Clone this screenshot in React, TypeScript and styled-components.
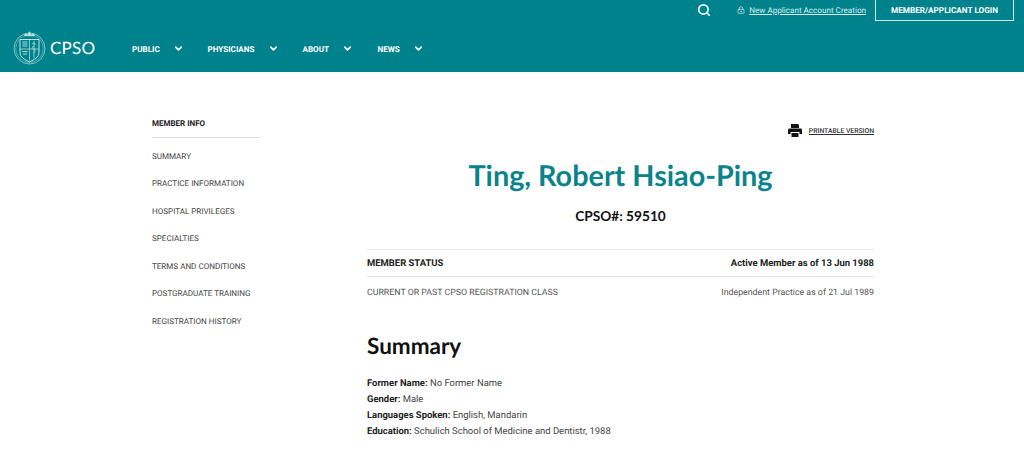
import styled, { createGlobalStyle } from "styled-components";
import { ChevronDown, Search, LockKeyhole } from "lucide-react";

const GlobalStyle = createGlobalStyle`
  html, body {
    margin: 0;
    padding: 0;
    background: #fff;
    font-family: Roboto, "Liberation Sans", sans-serif;
    text-rendering: geometricPrecision;
    overflow: hidden;
  }
  * {
    box-sizing: border-box;
  }
`;

const Header = styled.header`
  height: 72px;
  background-color: #00828c;
  color: #fff;
  display: flex;
  flex-direction: column;
`;

const TopBar = styled.div`
  display: flex;
  justify-content: flex-end;
  align-items: flex-start;
  padding-right: 10px;
  height: 21px;
`;

const SearchButton = styled.span`
  display: flex;
  margin: 3px 26px 0 0;
  color: #e6f5f5;
`;

const AccountLink = styled.a`
  display: flex;
  align-items: center;
  gap: 4px;
  height: 20px;
  margin-right: 9px;
  font-size: 8.12px;
  color: #d8efef;
  span {
    text-decoration: underline;
  }
`;

const LoginButton = styled.a`
  width: 139px;
  height: 21px;
  padding-top: 1px;
  border: 1px solid #cfe8e8;
  border-top: 0;
  display: flex;
  align-items: center;
  justify-content: center;
  font-size: 8.2px;
  font-weight: 700;
`;

const NavBar = styled.div`
  display: flex;
  align-items: center;
  margin-top: 8px;
  padding-left: 13px;
  height: 36px;
`;

const Logo = styled.a`
  display: flex;
  align-items: center;
  gap: 4px;
  width: 119px;
  font-family: Lato, sans-serif;
  font-size: 17px;
  letter-spacing: 0.2px;
`;

const MainMenu = styled.nav`
  display: flex;
  margin-top: 3px;
`;

const MenuItem = styled.a<{ $width: number }>`
  display: flex;
  align-items: center;
  width: ${(p) => p.$width}px;
  font-size: 8.1px;
  font-weight: 700;
  svg {
    margin-left: 13px;
  }
`;

const Page = styled.main`
  display: flex;
  padding: 45px 150px 0 152px;
`;

const Sidebar = styled.aside`
  width: 108px;
  margin-right: 107px;
`;

const SidebarTitle = styled.h4`
  margin: 0;
  height: 21px;
  border-bottom: 1px solid #dedede;
  font-size: 8px;
  font-weight: 700;
  line-height: 14px;
  color: #222;
`;

const SidebarList = styled.ul`
  list-style: none;
  margin: 11.5px 0 0;
  padding: 0;
`;

const SidebarItem = styled.li`
  height: 27.5px;
  font-size: 8.05px;
  line-height: 13px;
  color: #444;
  white-space: nowrap;
`;

const Content = styled.section`
  width: 507px;
`;

const PrintRow = styled.div`
  display: flex;
  justify-content: flex-end;
  align-items: center;
  gap: 7px;
  margin-top: 7px;
  height: 13px;
  color: #111;
`;

const PrintLink = styled.a`
  font-size: 6.8px;
  font-weight: 500;
  text-decoration: underline;
  color: #333;
`;

const Name = styled.h1`
  margin: 22px 0 0;
  text-align: center;
  font-family: Lato, sans-serif;
  font-size: 28.8px;
  line-height: 34px;
  font-weight: 700;
  color: #0a838c;
`;

const MemberNumber = styled.h3`
  margin: 14px 0 0;
  text-align: center;
  font-family: Lato, sans-serif;
  font-size: 13.7px;
  line-height: 18px;
  font-weight: 700;
  color: #111;
`;

const StatusRow = styled.div<{ $strong?: boolean }>`
  display: flex;
  justify-content: space-between;
  align-items: ${(p) => (p.$strong ? "center" : "flex-end")};
  height: 27px;
  padding-bottom: ${(p) => (p.$strong ? 0 : 5)}px;
  font-size: ${(p) => (p.$strong ? 9.45 : 8.8)}px;
  font-weight: ${(p) => (p.$strong ? 700 : 400)};
  color: ${(p) => (p.$strong ? "#222" : "#555")};
  border-top: 1px solid #e4e4e4;
`;

const StatusTable = styled.div`
  margin-top: 24px;
`;

const SectionTitle = styled.h2`
  margin: 29px 0 0;
  font-family: Lato, sans-serif;
  font-size: 22.5px;
  line-height: 28px;
  font-weight: 700;
  color: #111;
`;

const Details = styled.div`
  margin-top: 16px;
`;

const DetailLine = styled.p`
  margin: 0;
  font-size: 9.45px;
  line-height: 16px;
  color: #444;
  b {
    font-weight: 700;
    color: #222;
  }
`;

function CrestLogo() {
  return (
    <svg width="33" height="35" viewBox="0 0 33 35" fill="none" stroke="#bfe3e3" strokeWidth="0.7">
      <circle cx="16.5" cy="18.5" r="15.5" />
      <circle cx="16.5" cy="18.5" r="13.8" strokeWidth="0.4" />
      <path d="M7 9.5h19v13c0 5-5 7-9.5 9.5C12 29.5 7 27.5 7 22.5z" strokeWidth="1" />
      <path d="M16.5 9.5v21M7 19h19" />
      <path d="M9.5 12h5M9.5 14h5M9.5 16h5M9.5 21.5h5M10 24h4" strokeWidth="0.9" />
      <path d="M21 11v17M19 14c3-2 4 0 2 1.5s-2 3 0 4 1 3-1 3.5" />
      <path d="M11 6l1.5-2.5L14.5 5l2-3.5 2 3.5 2-1.5L22 6z" fill="#bfe3e3" strokeWidth="0.4" />
    </svg>
  );
}

function PrintIcon() {
  return (
    <svg width="14" height="13" viewBox="0 0 14 13" fill="currentColor">
      <path d="M3 0h7l1 1v3H3z" />
      <path d="M1.5 4.500h11c.8 0 1.500.7 1.500 1.500v4h-2.500v-2h-9v2H0V6c0-.8.7-1.500 1.500-1.500z" />
      <path d="M3.500 9h7v4h-7z" />
    </svg>
  );
}

const menu = [
  { label: "PUBLIC", width: 75.5 },
  { label: "PHYSICIANS", width: 95 },
  { label: "ABOUT", width: 75 },
  { label: "NEWS", width: 60 },
];

const sections = [
  "SUMMARY",
  "PRACTICE INFORMATION",
  "HOSPITAL PRIVILEGES",
  "SPECIALTIES",
  "TERMS AND CONDITIONS",
  "POSTGRADUATE TRAINING",
  "REGISTRATION HISTORY",
];

export default function App() {
  return (
    <>
      <GlobalStyle />
      <Header>
        <TopBar>
          <SearchButton>
            <Search size={14} strokeWidth={3} />
          </SearchButton>
          <AccountLink>
            <LockKeyhole size={8} />
            <span>New Applicant Account Creation</span>
          </AccountLink>
          <LoginButton>MEMBER/APPLICANT LOGIN</LoginButton>
        </TopBar>
        <NavBar>
          <Logo>
            <CrestLogo />
            CPSO
          </Logo>
          <MainMenu>
            {menu.map((item) => (
              <MenuItem key={item.label} $width={item.width}>
                {item.label}
                <ChevronDown size={11} strokeWidth={3.5} />
              </MenuItem>
            ))}
          </MainMenu>
        </NavBar>
      </Header>
      <Page>
        <Sidebar>
          <SidebarTitle>MEMBER INFO</SidebarTitle>
          <SidebarList>
            {sections.map((s) => (
              <SidebarItem key={s}>{s}</SidebarItem>
            ))}
          </SidebarList>
        </Sidebar>
        <Content>
          <PrintRow>
            <PrintIcon />
            <PrintLink>PRINTABLE VERSION</PrintLink>
          </PrintRow>
          <Name>Ting, Robert Hsiao-Ping</Name>
          <MemberNumber>CPSO#: 59510</MemberNumber>
          <StatusTable>
            <StatusRow $strong>
              <span>MEMBER STATUS</span>
              <span>Active Member as of 13 Jun 1988</span>
            </StatusRow>
            <StatusRow>
              <span>CURRENT OR PAST CPSO REGISTRATION CLASS</span>
              <span>Independent Practice as of 21 Jul 1989</span>
            </StatusRow>
          </StatusTable>
          <SectionTitle>Summary</SectionTitle>
          <Details>
            <DetailLine>
              <b>Former Name:</b> No Former Name
            </DetailLine>
            <DetailLine>
              <b>Gender:</b> Male
            </DetailLine>
            <DetailLine>
              <b>Languages Spoken:</b> English, Mandarin
            </DetailLine>
            <DetailLine>
              <b>Education:</b> Schulich School of Medicine and Dentistr, 1988
            </DetailLine>
          </Details>
        </Content>
      </Page>
    </>
  );
}
